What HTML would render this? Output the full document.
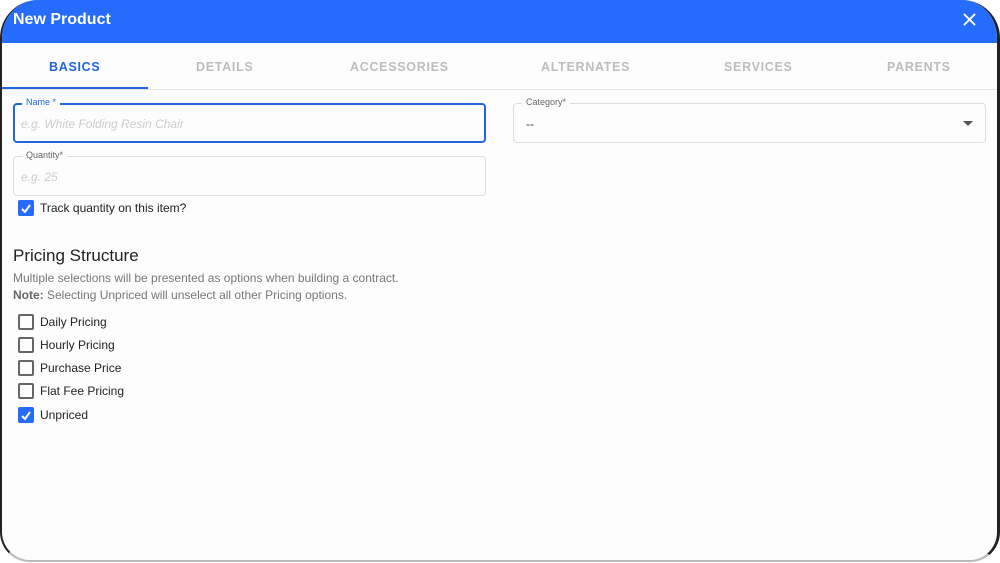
<!DOCTYPE html>
<html><head><style>
*{box-sizing:border-box;margin:0;padding:0}
body{width:1000px;height:563px;background:#fff;font-family:"Liberation Sans",Arial,sans-serif;overflow:hidden;position:relative}
.win{position:absolute;left:0;top:0;width:1000px;height:562px;border-radius:38px 38px 30px 30px;border-left:2px solid #222;border-right:3px solid #222;border-bottom:2px solid #bbb;overflow:hidden;background:#fdfdfd}
.hdr{height:43px;background:#256cfc;color:#fff;font-size:16px;font-weight:bold;padding:11px 0 0 11px}
.x{position:absolute;right:21px;top:13px}
.tabs{position:absolute;top:43px;left:0;right:0;height:47px;border-bottom:1px solid #e6e6e6}
.tab{position:absolute;top:17px;font-size:12.5px;font-weight:bold;letter-spacing:.7px;color:#bdbdbd}
.ind{position:absolute;left:0;top:44px;width:146px;height:2px;background:#1f66e0}
.fld{position:absolute;border:1px solid #ddd;border-radius:4px;height:40px}
.lbl{position:absolute;top:-7px;left:8px;background:#fdfdfd;padding:0 4px;font-size:9px;color:#666}
.ph{position:absolute;left:7px;top:13px;font-size:12px;font-style:italic;color:#ccc}
.cb{position:absolute;left:16px;width:16px;height:16px;border:2px solid #666;border-radius:2px}
.cb.on{background:#256cfc;border-color:#256cfc}
.cl{position:absolute;left:38px;font-size:12px;color:#222}
</style></head><body>
<div class="win">
<div class="hdr">New Product</div>
<svg class="x" width="13" height="13" viewBox="0 0 14 14"><path d="M1 1L13 13M13 1L1 13" stroke="#fff" stroke-width="2"/></svg>
<div class="tabs">
<div class="tab" style="left:47px;color:#1f66e0">BASICS</div>
<div class="tab" style="left:194px">DETAILS</div>
<div class="tab" style="left:348px">ACCESSORIES</div>
<div class="tab" style="left:539px">ALTERNATES</div>
<div class="tab" style="left:722px">SERVICES</div>
<div class="tab" style="left:885px">PARENTS</div>
<div class="ind"></div>
</div>
<div class="fld" style="left:11px;top:103px;width:473px;border:2px solid #1f66e0"><span class="lbl" style="color:#1f66e0;left:7px;top:-8px">Name *</span><span class="ph" style="top:12px;left:6px">e.g. White Folding Resin Chair</span></div>
<div class="fld" style="left:11px;top:156px;width:473px"><span class="lbl">Quantity*</span><span class="ph">e.g. 25</span></div>
<div class="fld" style="left:511px;top:103px;width:473px"><span class="lbl">Category*</span><span style="position:absolute;left:12px;top:13px;font-size:12px;color:#444">--</span>
<svg style="position:absolute;right:12px;top:17px" width="10" height="6"><path d="M0 0H10L5 5Z" fill="#555"/></svg></div>
<div class="cb on" style="top:200px"><svg width="12" height="12" viewBox="0 0 12 12"><path d="M2 6L5 9L10 2" stroke="#fff" stroke-width="2" fill="none"/></svg></div>
<div class="cl" style="top:201px">Track quantity on this item?</div>
<div style="position:absolute;left:11px;top:246px;font-size:17px;color:#222">Pricing Structure</div>
<div style="position:absolute;left:11px;top:271px;font-size:12px;color:#777">Multiple selections will be presented as options when building a contract.</div>
<div style="position:absolute;left:11px;top:288px;font-size:12px;color:#777"><b style="color:#666">Note:</b> Selecting Unpriced will unselect all other Pricing options.</div>
<div class="cb" style="top:314px"></div><div class="cl" style="top:315px">Daily Pricing</div>
<div class="cb" style="top:337px"></div><div class="cl" style="top:338px">Hourly Pricing</div>
<div class="cb" style="top:360px"></div><div class="cl" style="top:361px">Purchase Price</div>
<div class="cb" style="top:383px"></div><div class="cl" style="top:384px">Flat Fee Pricing</div>
<div class="cb on" style="top:407px"><svg width="12" height="12" viewBox="0 0 12 12"><path d="M2 6L5 9L10 2" stroke="#fff" stroke-width="2" fill="none"/></svg></div><div class="cl" style="top:408px">Unpriced</div>
</div>
</body></html>
